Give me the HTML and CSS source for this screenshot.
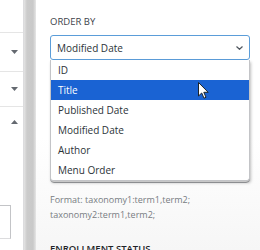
FILE: index.html
```html
<!DOCTYPE html>
<html lang="en">
<head>
  <meta charset="UTF-8">
  <meta name="viewport" content="width=device-width, initial-scale=1.0">
  <title>Order By</title>
  <link rel="stylesheet" href="styles.css">
</head>
<body>
  <div class="sidebar">
    <div class="side-row first"></div>
    <div class="side-row tall">
      <svg class="toggle" width="7" height="4" viewBox="0 0 7 4"><path d="M0 0h7L3.5 4z"/></svg>
    </div>
    <div class="side-row">
      <svg class="toggle" width="7" height="4" viewBox="0 0 7 4"><path d="M0 0h7L3.5 4z"/></svg>
    </div>
    <div class="side-row open">
      <svg class="toggle" width="7" height="4" viewBox="0 0 7 4"><path d="M0 4h7L3.5 0z"/></svg>
    </div>
    <div class="side-box"></div>
  </div>

  <div class="gutter"></div>

  <div class="panel">
    <div class="field-label">ORDER BY</div>
    <div class="select-form">
      <span class="select-text">Modified Date</span>
      <svg class="chevron" width="7" height="4" viewBox="0 0 7 4"><path d="M0.5 0.5L3.5 3.3L6.5 0.5" fill="none" stroke="#50575e" stroke-width="1.2"/></svg>
    </div>
    <div class="terms-box"></div>
    <div class="field-help">
      Format: taxonomy1:term1,term2;<br>
      taxonomy2:term1,term2;
    </div>
    <div class="field-label strong">ENROLLMENT STATUS</div>

    <ul class="select-list">
      <li class="list-item">ID</li>
      <li class="list-item active">Title</li>
      <li class="list-item">Published Date</li>
      <li class="list-item">Modified Date</li>
      <li class="list-item">Author</li>
      <li class="list-item">Menu Order</li>
    </ul>

    <svg class="cursor" width="11" height="17" viewBox="0 0 11 17">
      <path d="M0.5 0.5V14L3.7 11L6 16.2L8 15.3L5.8 10.3H10.2Z" fill="#fff" stroke="#1d2327" stroke-width="1" stroke-linejoin="round"/>
    </svg>
  </div>
</body>
</html>
```

FILE: styles.css
```css
body {
  margin: 0;
  padding: 0;
  display: flex;
  height: 250px;
  overflow: hidden;
  font-family: "Open Sans", "Liberation Sans", sans-serif;
  background-color: #fff;
}

.sidebar {
  width: 23px;
  flex-shrink: 0;
  border-right: 1px solid #dcdcde;
  background-color: #fff;
}

.side-row {
  height: 34px;
  display: flex;
  align-items: center;
  justify-content: flex-end;
  padding-right: 5px;
  border-bottom: 1px solid #e5e5e5;
}

.side-row.first {
  height: 32px;
}

.side-row.tall {
  height: 38px;
}

.side-row.open {
  height: 30px;
  border-bottom: 0;
}

.toggle {
  fill: #646970;
}

.side-box {
  margin-top: 68px;
  width: 10px;
  height: 32px;
  border-top: 1px solid #c3c4c7;
  border-right: 1px solid #c3c4c7;
  border-bottom: 1px solid #dcdcde;
}

.gutter {
  width: 12px;
  flex-shrink: 0;
  background: linear-gradient(to right, #e4e4e4, #cbcbcb 25%, #c9c9c9 75%, #e6e6e6);
}

.panel {
  flex: 1;
  position: relative;
  padding: 16px 10px 0 14px;
  background: linear-gradient(#fff 55%, #f6f6f6);
}

.field-label {
  font-size: 9.5px;
  line-height: 12px;
  color: #3c434a;
  margin-bottom: 7px;
}

.field-label.strong {
  margin-top: 21px;
  color: #1d2327;
  font-weight: 600;
}

.select-form {
  display: flex;
  align-items: center;
  justify-content: space-between;
  box-sizing: border-box;
  height: 25px;
  padding: 1px 6px 0 6px;
  border: 1px solid #5b9dd9;
  border-radius: 3px;
  background-color: #fff;
  font-size: 10px;
  color: #2c3338;
}

.terms-box {
  margin-top: 8px;
  height: 113px;
  border: 1px solid #a7aaad;
  border-radius: 4px;
  background-color: #fff;
}

.field-help {
  margin-top: 9px;
  font-size: 9px;
  line-height: 15px;
  color: #787c82;
}

.select-list {
  position: absolute;
  top: 60px;
  left: 14px;
  width: 200px;
  box-sizing: border-box;
  margin: 0;
  padding: 0;
  list-style: none;
  background-color: #fff;
  border: 1px solid #c3c4c7;
  border-top: 0;
  border-radius: 0 0 3px 3px;
  box-shadow: 1px 2px 3px rgba(0, 0, 0, 0.25);
}

.list-item {
  height: 20px;
  line-height: 20px;
  padding-left: 7px;
  font-size: 10px;
  color: #2c3338;
}

.list-item.active {
  background-color: #1a63d3;
  color: #fff;
}

.cursor {
  position: absolute;
  top: 82px;
  left: 162px;
}
```
